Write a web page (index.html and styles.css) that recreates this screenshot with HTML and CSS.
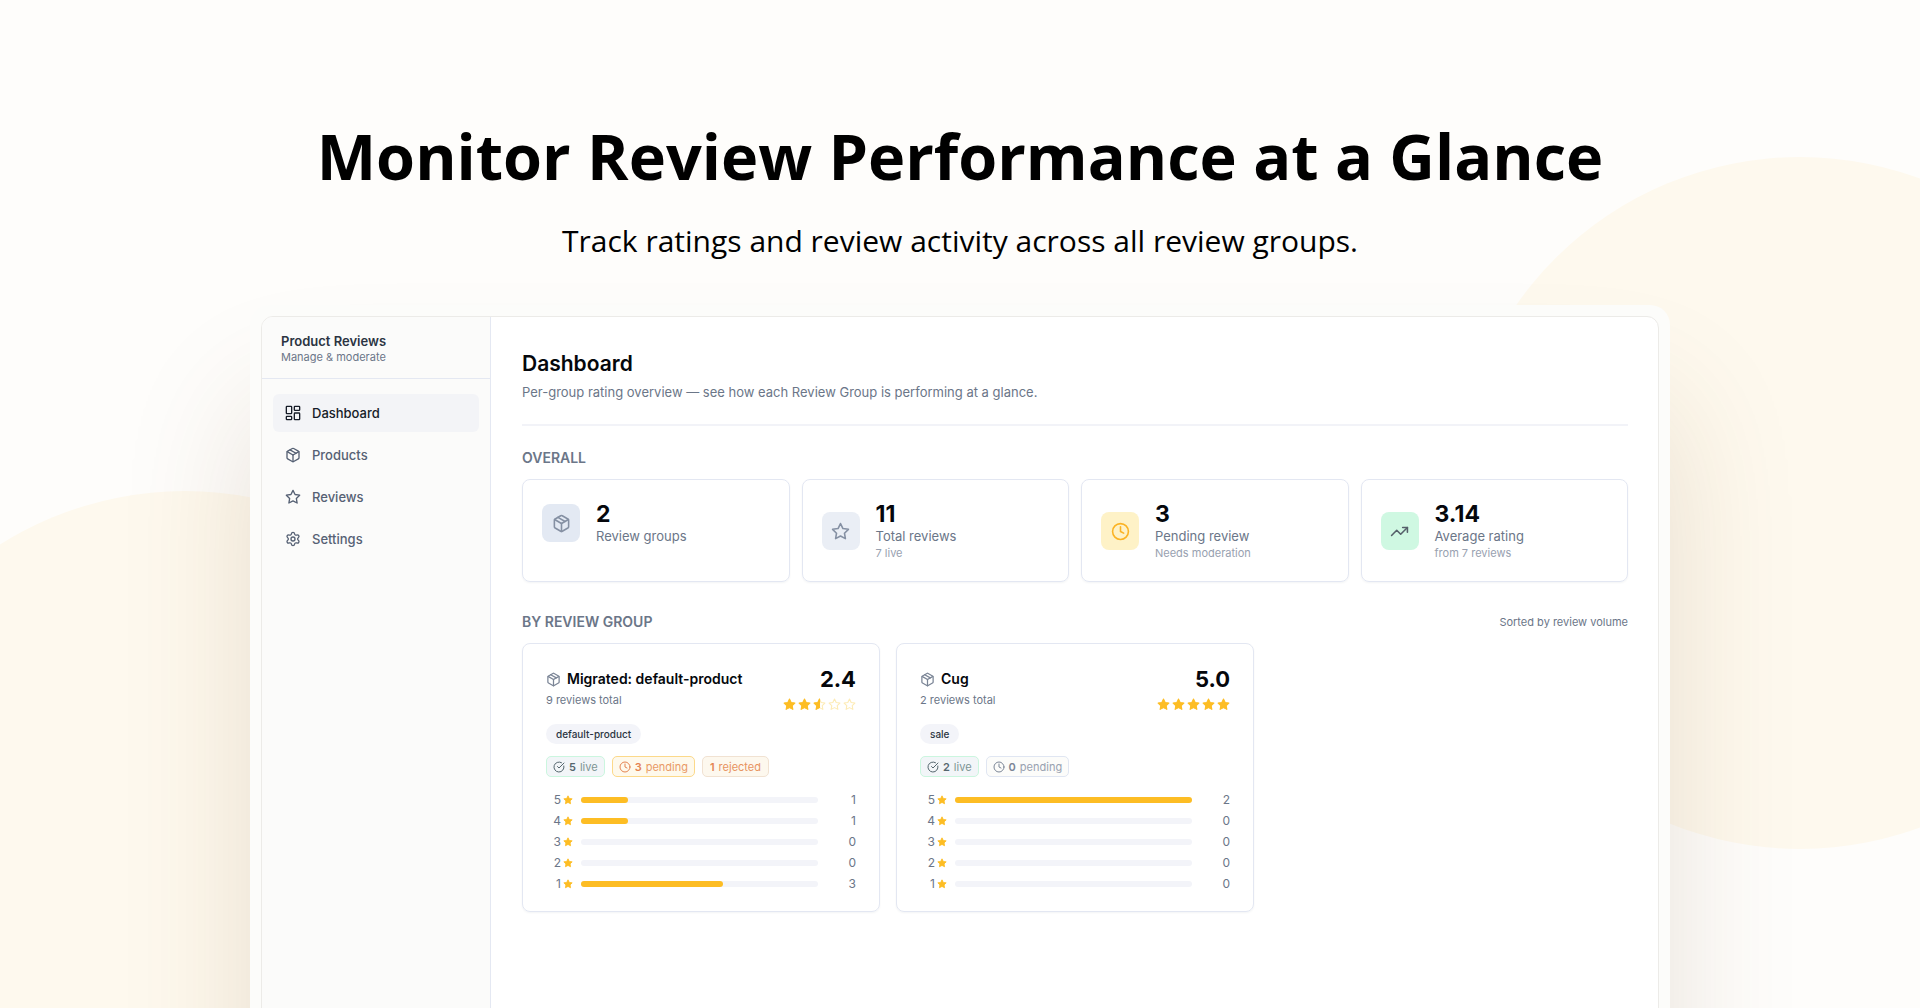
FILE: index.html
```html
<!DOCTYPE html>
<html lang="en">
<head>
  <meta charset="UTF-8">
  <meta name="viewport" content="width=device-width, initial-scale=1.0">
  <title>Product Reviews</title>
  <link rel="stylesheet" href="styles.css">
</head>
<body>
  <svg class="sprite" aria-hidden="true">
    <symbol id="icon-dashboard" viewBox="0 0 24 24"><rect x="2" y="2" width="8" height="11" rx="1"/><rect x="14" y="2" width="8" height="6" rx="1"/><rect x="14" y="12" width="8" height="10" rx="1"/><rect x="2" y="17" width="8" height="5" rx="1"/></symbol>
    <symbol id="icon-package" viewBox="0 0 24 24"><path d="M11 21.73a2 2 0 0 0 2 0l7-4A2 2 0 0 0 21 16V8a2 2 0 0 0-1-1.73l-7-4a2 2 0 0 0-2 0l-7 4A2 2 0 0 0 3 8v8a2 2 0 0 0 1 1.73z"/><path d="M12 22V12"/><path d="m3.3 7 8.7 5 8.7-5"/><path d="m7.5 4.27 9 5.15"/></symbol>
    <symbol id="icon-star" viewBox="0 0 24 24"><path d="M12 2l3.09 6.26L22 9.27l-5 4.87 1.18 6.88L12 17.77l-6.18 3.25L7 14.14 2 9.27l6.91-1.01z"/></symbol>
    <symbol id="icon-star-half" viewBox="0 0 24 24"><path d="M12 2v15.77l-6.18 3.25L7 14.14 2 9.27l6.91-1.01z"/></symbol>
    <symbol id="icon-settings" viewBox="0 0 24 24"><path d="M9.671 4.136a2.34 2.34 0 0 1 4.659 0 2.34 2.34 0 0 0 3.319 1.915 2.34 2.34 0 0 1 2.33 4.033 2.34 2.34 0 0 0 0 3.831 2.34 2.34 0 0 1-2.33 4.033 2.34 2.34 0 0 0-3.319 1.915 2.34 2.34 0 0 1-4.659 0 2.34 2.34 0 0 0-3.32-1.915 2.34 2.34 0 0 1-2.33-4.033 2.34 2.34 0 0 0 0-3.831A2.34 2.34 0 0 1 6.35 6.051a2.34 2.34 0 0 0 3.319-1.915"/><circle cx="12" cy="12" r="3"/></symbol>
    <symbol id="icon-clock" viewBox="0 0 24 24"><circle cx="12" cy="12" r="10"/><path d="M12 6v6l4 2"/></symbol>
    <symbol id="icon-check" viewBox="0 0 24 24"><path d="M21.8 10A10 10 0 1 1 17 3.34"/><path d="m9 11 3 3L22 4"/></symbol>
    <symbol id="icon-trend" viewBox="0 0 24 24"><path d="M16 7h6v6"/><path d="m22 7-8.5 8.5-5-5L2 17"/></symbol>
  </svg>

  <div class="stage">
    <header class="hero">
      <h1>Monitor Review Performance at a Glance</h1>
      <p>Track ratings and review activity across all review groups.</p>
    </header>

    <div class="frame">
      <div class="window">
        <aside class="sidebar">
          <div class="brand">
            <strong>Product Reviews</strong>
            <span>Manage &amp; moderate</span>
          </div>
          <nav class="nav">
            <a href="#" class="active"><svg class="icon"><use href="#icon-dashboard"/></svg>Dashboard</a>
            <a href="#"><svg class="icon"><use href="#icon-package"/></svg>Products</a>
            <a href="#"><svg class="icon"><use href="#icon-star"/></svg>Reviews</a>
            <a href="#"><svg class="icon"><use href="#icon-settings"/></svg>Settings</a>
          </nav>
        </aside>

        <main class="main">
          <div class="page-head">
            <h2>Dashboard</h2>
            <p>Per-group rating overview — see how each Review Group is performing at a glance.</p>
          </div>

          <h3 class="section-title">OVERALL</h3>
          <div class="stats">
            <div class="stat">
              <div class="stat-icon"><svg class="icon"><use href="#icon-package"/></svg></div>
              <div class="stat-text"><b>2</b><span>Review groups</span></div>
            </div>
            <div class="stat">
              <div class="stat-icon light"><svg class="icon"><use href="#icon-star"/></svg></div>
              <div class="stat-text"><b>11</b><span>Total reviews</span><small>7 live</small></div>
            </div>
            <div class="stat">
              <div class="stat-icon amber"><svg class="icon"><use href="#icon-clock"/></svg></div>
              <div class="stat-text"><b>3</b><span>Pending review</span><small>Needs moderation</small></div>
            </div>
            <div class="stat">
              <div class="stat-icon green"><svg class="icon"><use href="#icon-trend"/></svg></div>
              <div class="stat-text"><b>3.14</b><span>Average rating</span><small>from 7 reviews</small></div>
            </div>
          </div>

          <div class="section-head">
            <h3 class="section-title">BY REVIEW GROUP</h3>
            <span>Sorted by review volume</span>
          </div>
          <div class="groups">
            <article class="group">
              <div class="group-head">
                <div>
                  <h4><svg class="icon"><use href="#icon-package"/></svg>Migrated: default-product</h4>
                  <p>9 reviews total</p>
                </div>
                <div class="score">
                  <b>2.4</b>
                  <div class="stars">
                    <svg class="on"><use href="#icon-star"/></svg>
                    <svg class="on"><use href="#icon-star"/></svg>
                    <svg class="half"><use href="#icon-star"/><use class="fill" href="#icon-star-half"/></svg>
                    <svg><use href="#icon-star"/></svg>
                    <svg><use href="#icon-star"/></svg>
                  </div>
                </div>
              </div>
              <span class="tag">default-product</span>
              <div class="badges">
                <span class="badge live"><svg class="icon"><use href="#icon-check"/></svg><b>5</b> live</span>
                <span class="badge pending"><svg class="icon"><use href="#icon-clock"/></svg><b>3</b> pending</span>
                <span class="badge rejected"><b>1</b> rejected</span>
              </div>
              <ul class="bars">
                <li><span>5</span><svg><use href="#icon-star"/></svg><div class="track"><i style="width: 20%"></i></div><em>1</em></li>
                <li><span>4</span><svg><use href="#icon-star"/></svg><div class="track"><i style="width: 20%"></i></div><em>1</em></li>
                <li><span>3</span><svg><use href="#icon-star"/></svg><div class="track"></div><em>0</em></li>
                <li><span>2</span><svg><use href="#icon-star"/></svg><div class="track"></div><em>0</em></li>
                <li><span>1</span><svg><use href="#icon-star"/></svg><div class="track"><i style="width: 60%"></i></div><em>3</em></li>
              </ul>
            </article>

            <article class="group">
              <div class="group-head">
                <div>
                  <h4><svg class="icon"><use href="#icon-package"/></svg>Cug</h4>
                  <p>2 reviews total</p>
                </div>
                <div class="score">
                  <b>5.0</b>
                  <div class="stars">
                    <svg class="on"><use href="#icon-star"/></svg>
                    <svg class="on"><use href="#icon-star"/></svg>
                    <svg class="on"><use href="#icon-star"/></svg>
                    <svg class="on"><use href="#icon-star"/></svg>
                    <svg class="on"><use href="#icon-star"/></svg>
                  </div>
                </div>
              </div>
              <span class="tag">sale</span>
              <div class="badges">
                <span class="badge live"><svg class="icon"><use href="#icon-check"/></svg><b>2</b> live</span>
                <span class="badge"><svg class="icon"><use href="#icon-clock"/></svg><b>0</b> pending</span>
              </div>
              <ul class="bars">
                <li><span>5</span><svg><use href="#icon-star"/></svg><div class="track"><i style="width: 100%"></i></div><em>2</em></li>
                <li><span>4</span><svg><use href="#icon-star"/></svg><div class="track"></div><em>0</em></li>
                <li><span>3</span><svg><use href="#icon-star"/></svg><div class="track"></div><em>0</em></li>
                <li><span>2</span><svg><use href="#icon-star"/></svg><div class="track"></div><em>0</em></li>
                <li><span>1</span><svg><use href="#icon-star"/></svg><div class="track"></div><em>0</em></li>
              </ul>
            </article>
          </div>
        </main>
      </div>
    </div>
  </div>
</body>
</html>
```
FILE: styles.css
```css
* {
  box-sizing: border-box;
  margin: 0;
  padding: 0;
}
body {
  font-family: Inter, sans-serif;
  font-size: 13px;
  line-height: 16px;
  color: #6b7688;
  background: #fefdfb;
}
.sprite {
  position: absolute;
  width: 0;
  height: 0;
}
.stage {
  position: relative;
  z-index: 0;
  display: flex;
  flex-direction: column;
  align-items: center;
  height: 100vh;
  min-height: 940px;
  overflow: hidden;
}
/* background circles */
.stage::before,
.stage::after {
  content: "";
  position: absolute;
  z-index: -1;
  width: 692px;
  height: 692px;
  border-radius: 50%;
  background: #fef9ee;
}
.stage::before {
  top: 491px;
  left: -161px;
}
.stage::after {
  top: 157px;
  right: -226px;
}
.hero {
  padding: 112px 20px 44px;
  text-align: center;
  color: #000;
}
.hero h1 {
  font-family: "Open Sans", sans-serif;
  font-size: 63px;
  line-height: 88px;
  font-weight: 700;
}
.hero p {
  margin-top: 20px;
  font-family: "Open Sans", sans-serif;
  font-size: 30px;
  line-height: 41px;
}
.frame {
  flex: 1;
  display: flex;
  width: calc(100% - 32px);
  max-width: 1420px;
  margin-bottom: -160px;
  padding: 11px;
  border-radius: 20px;
  background: #fcfcfa;
  box-shadow: 0 100px 130px rgba(110, 65, 30, 0.15);
}
.window {
  flex: 1;
  display: flex;
  overflow: hidden;
  border: 1px solid #ecebe8;
  border-radius: 12px;
  background: #fff;
}
.icon {
  width: 16px;
  height: 16px;
  flex-shrink: 0;
  fill: none;
  stroke: currentColor;
  stroke-width: 2;
  stroke-linecap: round;
  stroke-linejoin: round;
}
.sidebar {
  width: 229px;
  flex-shrink: 0;
  border-right: 1px solid #e4e8f2;
  background: #fbfbfa;
}
.brand {
  display: flex;
  flex-direction: column;
  height: 62px;
  padding: 16px 19px;
  border-bottom: 1px solid #e4e8f2;
}
.brand strong {
  font-size: 13px;
  line-height: 16px;
  font-weight: 600;
  color: #2b3442;
}
.brand span {
  font-size: 11px;
  line-height: 16px;
}
.nav {
  display: flex;
  flex-direction: column;
  gap: 4px;
  padding: 15px 11px;
}
.nav a {
  display: flex;
  align-items: center;
  gap: 11px;
  height: 38px;
  padding: 0 12px;
  border-radius: 6px;
  font-weight: 500;
  color: #566174;
  text-decoration: none;
}
.nav a.active {
  color: #161c28;
  background: #f3f4f7;
}
.main {
  flex: 1;
  padding: 34px 30px 34px 31px;
}
.page-head {
  padding-bottom: 24px;
  border-bottom: 2px solid #f2f3f8;
}
.page-head h2 {
  font-size: 21px;
  line-height: 26px;
  font-weight: 600;
  color: #05070c;
}
.page-head p {
  margin-top: 7px;
}
.section-title {
  font-size: 14px;
  line-height: 16px;
  font-weight: 600;
}
.main > .section-title {
  margin: 24px 0 13px;
}
.stats {
  display: grid;
  grid-template-columns: repeat(4, 1fr);
  gap: 12px;
}
.stat {
  display: grid;
  grid-template-columns: 38px 1fr;
  column-gap: 16px;
  align-items: center;
  align-content: start;
  min-height: 103px;
  padding: 21px 19px 19px;
  border: 1px solid #e3e7f2;
  border-radius: 8px;
  box-shadow: 0 1px 2px rgba(20, 30, 60, 0.05);
}
.stat-icon {
  display: grid;
  place-items: center;
  width: 38px;
  height: 38px;
  border-radius: 8px;
  color: #8590a3;
  background: #e3e9f3;
}
.stat-icon .icon {
  width: 19px;
  height: 19px;
}
.stat-icon.light {
  background: #eaeef5;
}
.stat-icon.amber {
  color: #fbb324;
  background: #fef2c7;
}
.stat-icon.green {
  color: #55606a;
  background: #cff8e2;
}
.stat-text {
  display: flex;
  flex-direction: column;
}
.stat-text b {
  font-size: 23px;
  line-height: 26px;
  font-weight: 700;
  color: #05070c;
}
.stat-text span {
  line-height: 18px;
}
.stat-text small {
  font-size: 11px;
  line-height: 16px;
  color: #98a1b0;
}
.section-head {
  display: flex;
  justify-content: space-between;
  align-items: center;
  margin: 32px 0 13px;
}
.section-head span {
  font-size: 11px;
}
.groups {
  display: grid;
  grid-template-columns: repeat(3, 1fr);
  gap: 16px;
}
.group {
  padding: 23px 23px 19px;
  border: 1px solid #e3e7f2;
  border-radius: 8px;
  box-shadow: 0 1px 2px rgba(20, 30, 60, 0.05);
}
.group-head {
  display: flex;
  justify-content: space-between;
}
.group h4 {
  display: flex;
  align-items: center;
  gap: 6px;
  font-size: 14px;
  line-height: 24px;
  font-weight: 600;
  color: #05070c;
}
.group h4 .icon {
  width: 15px;
  height: 15px;
  color: #7b8596;
}
.group-head p {
  font-size: 11px;
  line-height: 18px;
}
.score {
  text-align: right;
}
.score b {
  display: block;
  font-size: 22px;
  line-height: 24px;
  color: #05070c;
}
.stars {
  display: flex;
  gap: 2px;
  margin-top: 7px;
}
.stars svg {
  width: 13px;
  height: 13px;
  fill: #fff;
  stroke: #fdebb5;
  stroke-width: 2;
  stroke-linejoin: round;
}
.stars .on,
.stars .fill {
  fill: #fdbd24;
  stroke: #fdbd24;
}
.tag {
  display: inline-block;
  margin-top: 13px;
  padding: 0 10px;
  border-radius: 10px;
  font-size: 10px;
  line-height: 20px;
  font-weight: 500;
  color: #2b3442;
  background: #f3f4f9;
}
.badges {
  display: flex;
  gap: 7px;
  margin-top: 12px;
}
.badge {
  display: flex;
  align-items: center;
  gap: 4px;
  height: 21px;
  padding: 0 6px;
  border: 1px solid #e0e6f2;
  border-radius: 5px;
  font-size: 11px;
  color: #98a1b0;
  background: #fcfcfa;
}
.badge b {
  font-weight: 600;
  color: #7b8596;
}
.badge .icon {
  width: 12px;
  height: 12px;
  color: #7b8596;
}
.badge.live {
  border-color: #cbf6df;
  color: #7c9494;
  background: #f2f5f8;
}
.badge.live b,
.badge.live .icon {
  color: #55666e;
}
.badge.pending {
  border-color: #fcd98a;
  color: #e99a66;
  background: #fef9ec;
}
.badge.rejected {
  padding: 0 7px;
  border-color: #f1e2d2;
  color: #e8935f;
  background: #fdf8ee;
}
.badge.pending b,
.badge.pending .icon,
.badge.rejected b {
  color: #e48350;
}
.bars {
  display: grid;
  gap: 5px;
  margin-top: 15px;
  list-style: none;
}
.bars li {
  display: flex;
  align-items: center;
  font-size: 12px;
  line-height: 16px;
}
.bars span {
  width: 15px;
  text-align: right;
}
.bars svg {
  width: 10px;
  height: 10px;
  margin: 0 8px 0 2px;
  fill: #fdbd24;
  stroke: #fdbd24;
  stroke-width: 2;
  stroke-linejoin: round;
}
.track {
  flex: 1;
  height: 6px;
  border-radius: 3px;
  background: #f3f4f9;
}
.track i {
  display: block;
  height: 6px;
  border-radius: 3px;
  background: #fdbd24;
}
.bars em {
  width: 38px;
  font-style: normal;
  text-align: right;
}
```
